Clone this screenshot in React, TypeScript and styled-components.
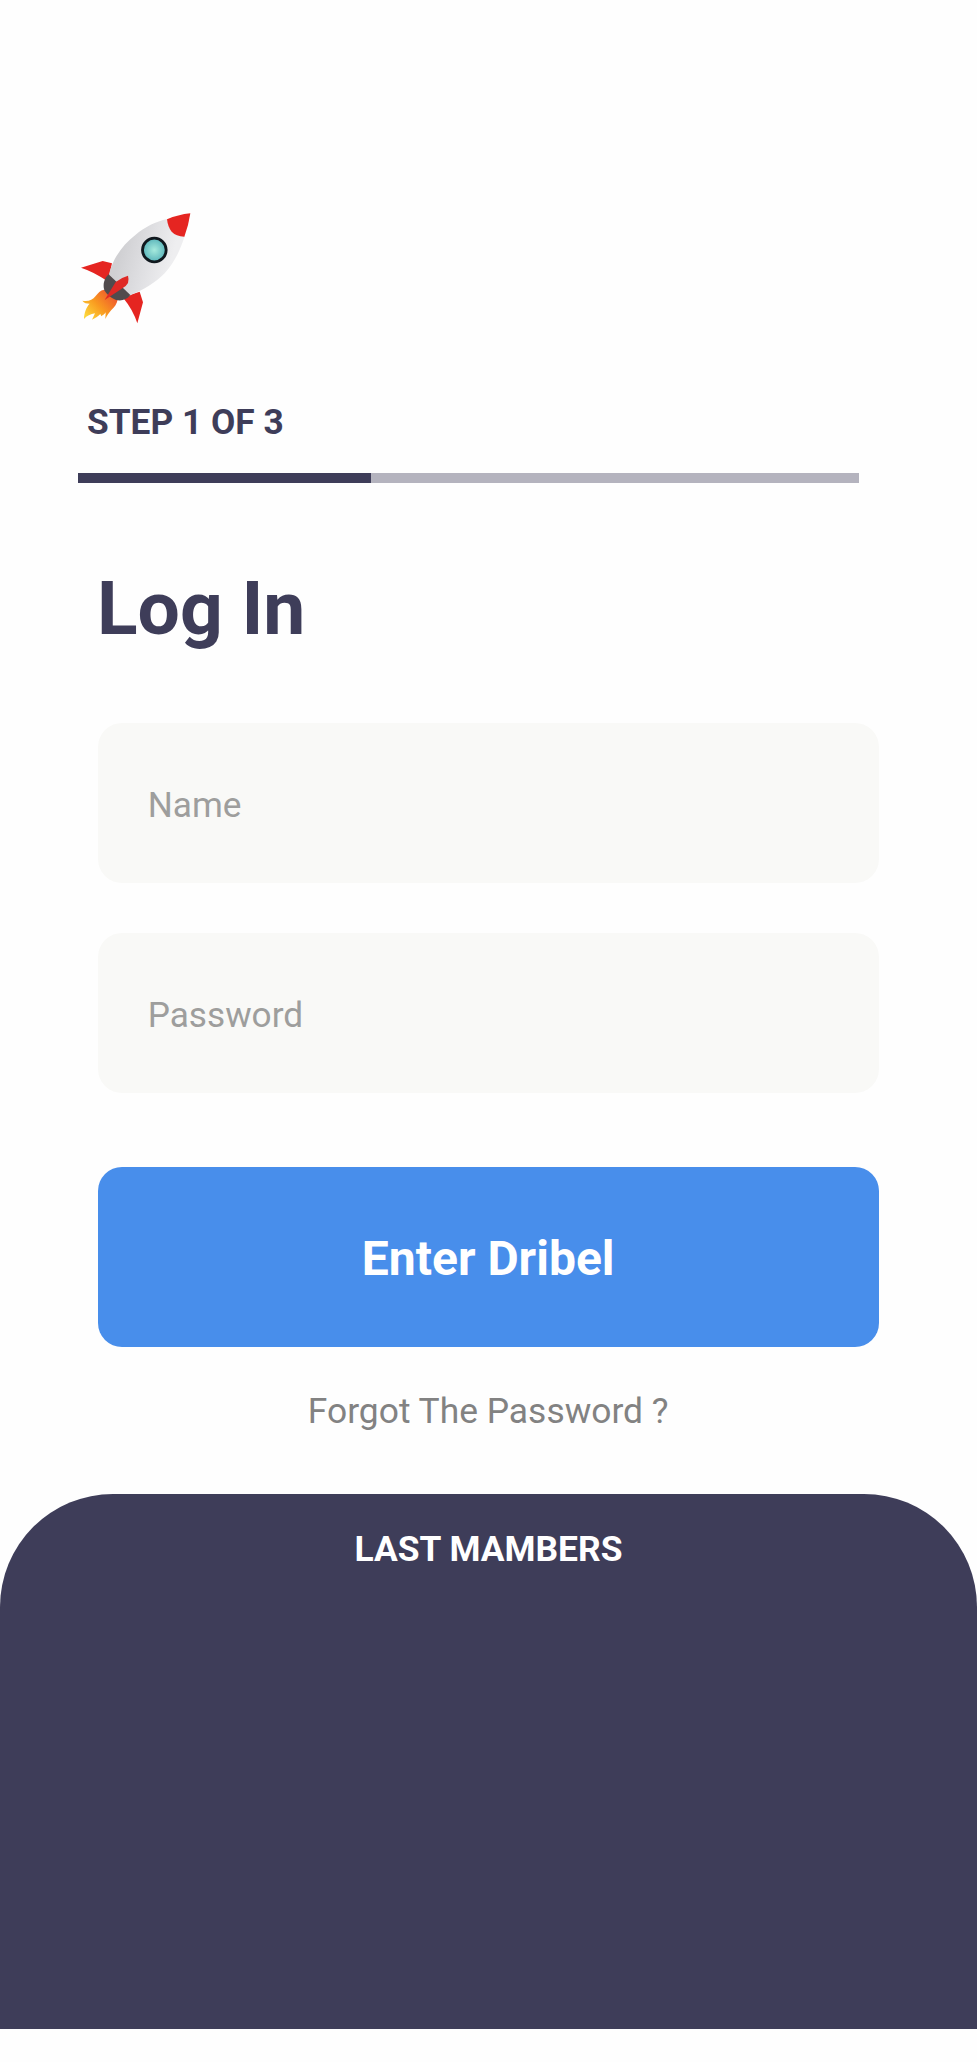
import React from "react";
import styled, { createGlobalStyle } from "styled-components";

const GlobalStyle = createGlobalStyle`
  * { box-sizing: border-box; }
  body { margin: 0; background: #fefefe; font-family: Roboto, sans-serif; }
`;

const Screen = styled.main`
  display: flex;
  flex-direction: column;
  width: 977px;
  height: 2062px;
  padding-top: 200px;
  overflow: hidden;
`;

const Logo = styled.svg`
  width: 135px;
  height: 135px;
  margin-left: 70px;
  flex: none;
`;

const Step = styled.p`
  margin: 66px 0 0 87px;
  font-size: 35.3px;
  line-height: 42px;
  font-weight: 700;
  color: #3e3d59;
`;

const Track = styled.div`
  width: 781px;
  height: 10px;
  margin: 30px 0 0 78px;
  background: #b4b3be;
  flex: none;
`;

const Progress = styled.div<{ $value: number }>`
  width: ${(p) => p.$value}%;
  height: 100%;
  background: #3e3d59;
`;

const Form = styled.form`
  display: flex;
  flex-direction: column;
  width: 781px;
  margin: 81px 0 0 97.7px;
`;

const Title = styled.h1`
  margin: 0 0 70.6px -0.7px;
  font-size: 75px;
  line-height: 88px;
  font-weight: 700;
  color: #3e3d59;
`;

const Fields = styled.div`
  display: flex;
  flex-direction: column;
  gap: 50px;
`;

const Field = styled.input`
  height: 160px;
  padding: 4px 50px 0;
  border: 0;
  border-radius: 24px;
  outline: 0;
  background: #f9f9f7;
  font: 400 35.2px Roboto, sans-serif;
  color: #3e3d59;
  &::placeholder { color: #9e9e9d; opacity: 1; }
`;

const Submit = styled.button`
  height: 180px;
  margin-top: 74.1px;
  padding: 4px 0 0;
  border: 0;
  border-radius: 24px;
  background: #488eeb;
  font: 700 48px Roboto, sans-serif;
  color: #fff;
`;

const Forgot = styled.a`
  margin-top: 43.3px;
  font-size: 35.4px;
  line-height: 42px;
  text-align: center;
  color: #828282;
`;

const Members = styled.section`
  height: 535.5px;
  margin-top: 62px;
  padding-top: 34px;
  border-radius: 113px 113px 0 0;
  background: #3e3d59;
  flex: none;
`;

const MembersTitle = styled.h2`
  margin: 0;
  font-size: 35.4px;
  line-height: 42px;
  font-weight: 700;
  text-align: center;
  color: #fff;
`;

const Rocket = () => (
  <Logo viewBox="0 0 405 405" aria-hidden="true">
    <defs>
      <linearGradient id="hull" gradientUnits="userSpaceOnUse" x1="150" y1="160" x2="300" y2="200">
        <stop offset="0" stopColor="#d0d0d3" />
        <stop offset="0.5" stopColor="#dfdfe2" />
        <stop offset="1" stopColor="#eeeef0" />
      </linearGradient>
      <radialGradient id="glass">
        <stop offset="0" stopColor="#a6eadd" />
        <stop offset="1" stopColor="#5bb5bb" />
      </radialGradient>
      <linearGradient id="flame" gradientUnits="userSpaceOnUse" x1="120" y1="285" x2="50" y2="350">
        <stop offset="0" stopColor="#f0622b" />
        <stop offset="0.5" stopColor="#f99b20" />
        <stop offset="1" stopColor="#fcd53a" />
      </linearGradient>
    </defs>
    <path fill="url(#flame)" d="M102 269C91 271 84 279 77 288C67 301 53 306 37 302C42 309 50 311 59 311C49 321 42 339 42 357C50 348 62 342 75 340L66 359C75 355 84 350 91 342L94 349C99 345 104 342 107 337L106 357C112 345 117 338 124 330C134 321 140 312 143 299Z" />
    <path fill="#e52521" d="M33 203L98 183L126 190L118 225L108 241Q72 216 33 203Z" />
    <path fill="#e52521" d="M162 297L182 284L209 275L219 307L202 370Q188 328 162 297Z" />
    <path fill="url(#hull)" d="M117 223C128 177 157 134 197 104C226 80 257 65 292 57L344 109C331 150 313 188 284 220C258 247 220 270 178 287Z" />
    <path fill="#514b4d" d="M116 223L181 285C170 299 155 304 138 300C121 293 109 283 103 271C97 251 104 234 116 223Z" />
    <path fill="#df2925" d="M104 300L137 246Q155 232 174 227Q177 236 174 249L167 258L145 273Z" />
    <path fill="#e52521" d="M291 58Q324 44 361 40Q356 76 343 110Q318 109 305 95Q294 83 291 58Z" />
    <circle cx="253" cy="150" r="35.5" fill="url(#glass)" stroke="#10181e" strokeWidth="8.5" />
  </Logo>
);

export default function App() {
  return (
    <>
      <GlobalStyle />
      <Screen>
        <Rocket />
        <Step>STEP 1 OF 3</Step>
        <Track>
          <Progress $value={37.5} />
        </Track>
        <Form>
          <Title>Log In</Title>
          <Fields>
            <Field placeholder="Name" />
            <Field type="password" placeholder="Password" />
          </Fields>
          <Submit type="button">Enter Dribel</Submit>
          <Forgot>Forgot The Password ?</Forgot>
        </Form>
        <Members>
          <MembersTitle>LAST MAMBERS</MembersTitle>
        </Members>
      </Screen>
    </>
  );
}
